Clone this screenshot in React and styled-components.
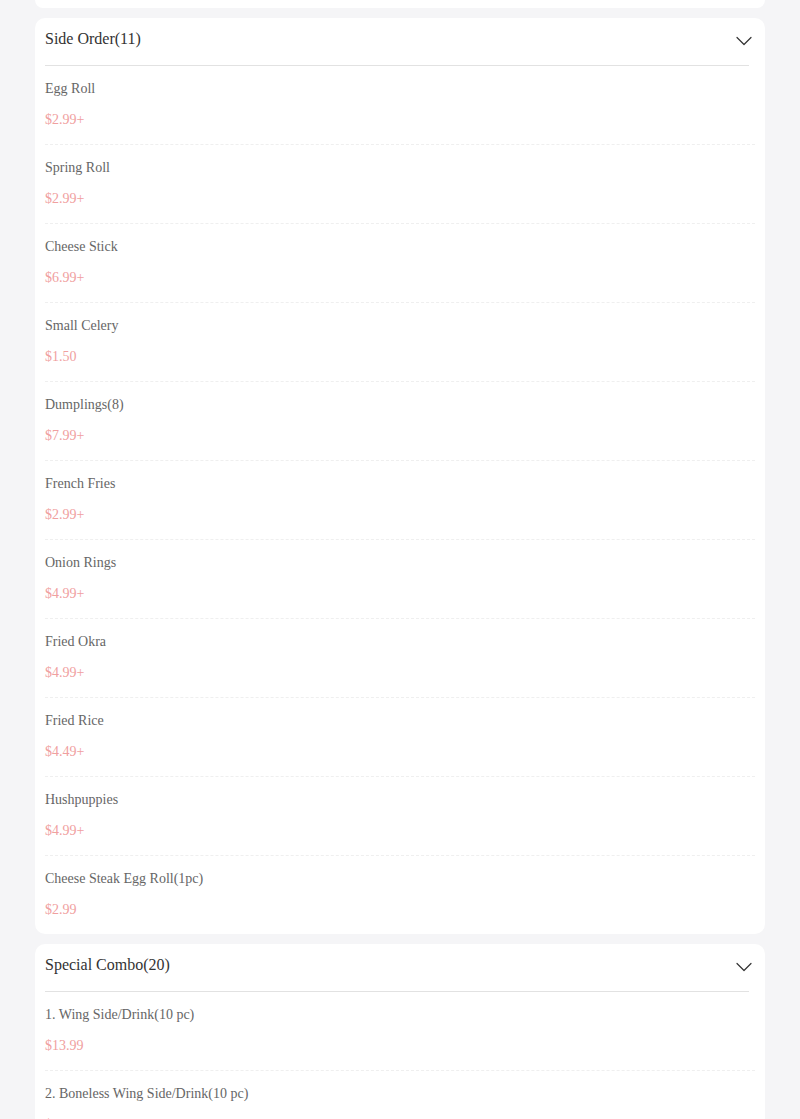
import React from "react";
import styled, { createGlobalStyle } from "styled-components";

const Global = createGlobalStyle`
  html, body { margin: 0; padding: 0; background: #f5f5f7; }
  body { font-family: "Liberation Serif", "Times New Roman", serif; }
`;

const Page = styled.div`
  display: flex;
  flex-direction: column;
  gap: 10px;
  padding: 0 35px;
`;

const StubCard = styled.div`
  height: 8px;
  background: #fff;
  border-radius: 0 0 10px 10px;
`;

const Card = styled.section`
  background: #fff;
  border-radius: 10px;
  padding: 0 10px;
`;

const Header = styled.div`
  display: flex;
  justify-content: space-between;
  align-items: flex-start;
  height: 48px;
  margin-right: 6px;
  box-sizing: border-box;
  padding-top: ${p => p.$top}px;
  border-bottom: 1px solid #e2e2e2;
`;

const Title = styled.h2`
  margin: 0;
  font-size: 16px;
  font-weight: normal;
  line-height: 22px;
  color: #333;
`;

const Chevron = styled.svg`
  margin-top: ${p => p.$mt}px;
  margin-right: -3px;
`;

const Item = styled.div`
  padding: 12px 0 13px;
  border-bottom: 1px dashed #efefef;
  &:last-child { border-bottom: none; }
`;

const Name = styled.div`
  font-size: 14px;
  line-height: 22px;
  color: #666;
`;

const Price = styled.div`
  margin-top: 9px;
  font-size: 14px;
  line-height: 22px;
  color: #f0a0a0;
`;

const sections = [
  {
    title: "Side Order(11)",
    top: 10,
    items: [
      ["Egg Roll", "$2.99+"],
      ["Spring Roll", "$2.99+"],
      ["Cheese Stick", "$6.99+"],
      ["Small Celery", "$1.50"],
      ["Dumplings(8)", "$7.99+"],
      ["French Fries", "$2.99+"],
      ["Onion Rings", "$4.99+"],
      ["Fried Okra", "$4.99+"],
      ["Fried Rice", "$4.49+"],
      ["Hushpuppies", "$4.99+"],
      ["Cheese Steak Egg Roll(1pc)", "$2.99"],
    ],
  },
  {
    title: "Special Combo(20)",
    top: 10,
    items: [
      ["1. Wing Side/Drink(10 pc)", "$13.99"],
      ["2. Boneless Wing Side/Drink(10 pc)", "$13.99"],
      ["3. Wing Side/Drink(20 pc)", "$24.99"],
    ],
  },
];

export default function App() {
  return (
    <>
      <Global />
      <Page>
        <StubCard />
        {sections.map(s => (
          <Card key={s.title}>
            <Header $top={s.top}>
              <Title>{s.title}</Title>
              <Chevron $mt={8} width="16" height="10" viewBox="0 0 16 10" fill="none">
                <path d="M1 1.5 L8 8.5 L15 1.5" stroke="#333" strokeWidth="1.2" strokeLinecap="round" strokeLinejoin="round" />
              </Chevron>
            </Header>
            {s.items.map(([n, p]) => (
              <Item key={n}>
                <Name>{n}</Name>
                <Price>{p}</Price>
              </Item>
            ))}
          </Card>
        ))}
      </Page>
    </>
  );
}
